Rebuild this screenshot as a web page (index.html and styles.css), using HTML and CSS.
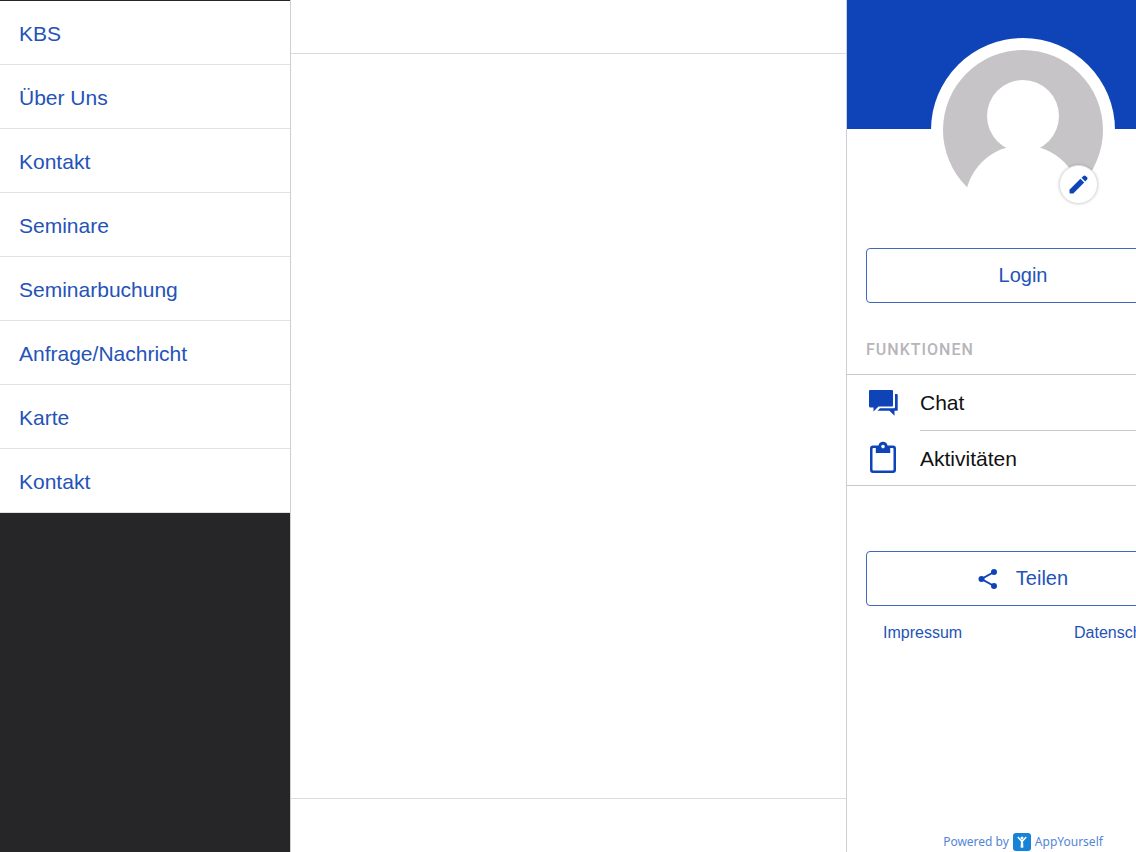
FILE: index.html
```html
<!DOCTYPE html>
<html lang="de">
<head>
<meta charset="utf-8">
<title>KBS</title>
<link rel="stylesheet" href="styles.css">
</head>
<body>
<div class="app">
  <nav class="menu">
    <ul class="menu-list">
      <li><a class="menu-link" href="#kbs">KBS</a></li>
      <li><a class="menu-link" href="#ueber-uns">Über Uns</a></li>
      <li><a class="menu-link" href="#kontakt">Kontakt</a></li>
      <li><a class="menu-link" href="#seminare">Seminare</a></li>
      <li><a class="menu-link" href="#seminarbuchung">Seminarbuchung</a></li>
      <li><a class="menu-link" href="#anfrage">Anfrage/Nachricht</a></li>
      <li><a class="menu-link" href="#karte">Karte</a></li>
      <li><a class="menu-link" href="#kontakt-2">Kontakt</a></li>
    </ul>
  </nav>
  <main class="content">
    <header class="content-top"></header>
    <section class="content-body"></section>
    <footer class="content-bottom"></footer>
  </main>
  <aside class="panel">
    <div class="panel-inner">
      <div class="cover"></div>
      <div class="avatar">
        <svg class="avatar-image" viewBox="0 0 160 160" aria-hidden="true">
          <circle cx="80" cy="80" r="80" fill="#c6c4c6"/>
          <g fill="#fff">
            <circle cx="80" cy="66" r="36"/>
            <circle cx="80" cy="153" r="58"/>
            <rect x="20" y="148" width="120" height="14"/>
          </g>
        </svg>
        <button class="edit" type="button" aria-label="Profilbild bearbeiten">
          <svg class="edit-icon" viewBox="0 0 20 20" aria-hidden="true">
            <path d="M0.5 15.5 12 4 16 8 4.5 19.5H1.5Q.5 19.5.5 18.5Z"/>
            <path d="M13.2 2.9 15.2 1Q16.5-.1 17.6 1L19 2.4Q20.1 3.5 19 4.8L17.1 6.8Z"/>
          </svg>
        </button>
      </div>
      <button class="button login" type="button">Login</button>
      <h2 class="heading">Funktionen</h2>
      <ul class="functions">
        <li class="function">
          <svg class="function-icon" viewBox="0 0 30 30" aria-hidden="true">
            <path d="M2 2H24Q25 2 25 3V17.5Q25 18.5 24 18.5H10.5L5.5 23.5V19.5H2.5Q1 19.5 1 18V3Q1 2 2 2Z"/>
            <path d="M27 6H28.7Q29.7 6 29.7 7V22.7H26.5V27.7L21.5 22.7H9.5L12 20.3H26Q27 20.3 27 19.3Z"/>
          </svg>
          <a class="function-link" href="#chat">Chat</a>
        </li>
        <li class="function">
          <svg class="function-icon" viewBox="0 0 30 30" aria-hidden="true">
            <path fill-rule="evenodd" d="M5 2.5H10.5A4.6 4.6 0 0 1 19.5 2.5H25Q28 2.5 28 5.5V27Q28 30 25 30H5Q2 30 2 27V5.5Q2 2.5 5 2.5ZM7.8 5H5.5Q4.5 5 4.5 6V26.5Q4.5 27.5 5.5 27.5H24.5Q25.5 27.5 25.5 26.5V6Q25.5 5 24.5 5H22.2V10H7.8ZM15 1.8A1.8 1.8 0 1 0 15 5.4A1.8 1.8 0 1 0 15 1.8Z"/>
          </svg>
          <a class="function-link" href="#aktivitaeten">Aktivitäten</a>
        </li>
      </ul>
      <button class="button share" type="button">
        <svg class="share-icon" viewBox="0 0 20 20" aria-hidden="true">
          <path d="M16 3 3.5 10 16 17" fill="none" stroke="#0f44b8" stroke-width="2"/>
          <circle cx="16" cy="3" r="3"/><circle cx="3.5" cy="10" r="3"/><circle cx="16" cy="17" r="3"/>
        </svg>
        <span>Teilen</span>
      </button>
      <div class="legal">
        <a class="legal-link" href="#impressum">Impressum</a>
        <a class="legal-link" href="#datenschutz">Datenschutz</a>
      </div>
      <a class="powered" href="#appyourself">
        <span>Powered by</span>
        <svg class="powered-logo" viewBox="0 0 18 18" aria-hidden="true">
          <rect width="18" height="18" rx="3" fill="#1683d8"/>
          <circle cx="9" cy="5" r="1.5" fill="#fff"/>
          <path d="M4.8 4 8 7.6H10L13.2 4M9 7.5V14.5" fill="none" stroke="#fff" stroke-width="1.5"/>
          <path d="M8 7H10L10.4 14.5H7.6Z" fill="#fff"/>
        </svg>
        <span>AppYourself</span>
      </a>
    </div>
  </aside>
</div>
</body>
</html>
```
FILE: styles.css
```css
* {
  box-sizing: border-box;
}

body {
  margin: 0;
  font-family: "Liberation Sans", Arial, sans-serif;
  background: #fff;
  color: #111;
}

a {
  color: #2453b8;
  text-decoration: none;
}

ul {
  margin: 0;
  padding: 0;
  list-style: none;
}

svg {
  display: block;
  fill: #0f44b8;
}

.app {
  display: grid;
  grid-template-columns: 290px 1fr 290px;
  min-height: 100vh;
  overflow: hidden;
}

.menu {
  background: #262528;
  padding-top: 1px;
}

.menu-link {
  display: flex;
  align-items: center;
  height: 64px;
  padding: 2px 19px 0;
  background: #fff;
  border-bottom: 1px solid #e2e2e5;
  font-size: 21px;
}

.content {
  display: flex;
  flex-direction: column;
  border-left: 1px solid #cfcfd2;
}

.content-top {
  height: 54px;
  border-bottom: 1px solid #dcdcde;
}

.content-body {
  flex: 1;
}

.content-bottom {
  height: 54px;
  border-top: 1px solid #dcdcde;
}

.panel {
  border-left: 1px solid #cfcfd2;
  overflow: hidden;
}

.panel-inner {
  display: flex;
  flex-direction: column;
  width: 352px;
  min-height: 100vh;
  padding-bottom: 1px;
}

.cover {
  height: 129px;
  background: #0f44b8;
}

.avatar {
  position: relative;
  align-self: center;
  width: 184px;
  height: 184px;
  margin-top: -91px;
  padding: 12px;
  border-radius: 50%;
  background: #fff;
}

.edit {
  position: absolute;
  right: 17px;
  bottom: 18px;
  display: grid;
  place-items: center;
  width: 39px;
  height: 39px;
  padding: 0;
  border: 1px solid #e2e2e2;
  border-radius: 50%;
  background: #fff;
  box-shadow: 0 0 3px rgba(0, 0, 0, 0.2);
}

.edit-icon {
  width: 19px;
  height: 19px;
}

.button {
  display: flex;
  align-items: center;
  justify-content: center;
  gap: 18px;
  height: 55px;
  margin: 0 19px;
  border: 1px solid #4068bd;
  border-radius: 4px;
  background: #fff;
  color: #2453b8;
  font: 20px "Liberation Sans", Arial, sans-serif;
}

.login {
  margin-top: 26px;
}

.heading {
  margin: 37px 19px 14px;
  color: #b7b5b9;
  font: 500 16px/20px Roboto, sans-serif;
  letter-spacing: 1px;
  text-transform: uppercase;
}

.functions {
  border-top: 1px solid #c8c8cb;
  border-bottom: 1px solid #c8c8cb;
}

.function {
  display: flex;
  align-items: center;
  gap: 22px;
  padding-left: 21px;
}

.function-icon {
  width: 30px;
  height: 30px;
  overflow: visible;
}

.function-link {
  display: flex;
  flex: 1;
  align-items: center;
  min-height: 55px;
  padding-top: 1px;
  color: #111;
  font-size: 21px;
}

.function + .function .function-link {
  border-top: 1px solid #c8c8cb;
}

.share {
  margin-top: 65px;
}

.share-icon {
  width: 20px;
  height: 20px;
}

.legal {
  display: flex;
  justify-content: space-between;
  padding: 17px 36px;
}

.legal-link {
  font-size: 16px;
  line-height: 20px;
}

.powered {
  display: flex;
  align-items: center;
  align-self: center;
  gap: 4px;
  margin-top: auto;
  color: #5585d8;
  font: 12px/18px "Noto Sans", sans-serif;
}

.powered-logo {
  width: 18px;
  height: 18px;
}
```
